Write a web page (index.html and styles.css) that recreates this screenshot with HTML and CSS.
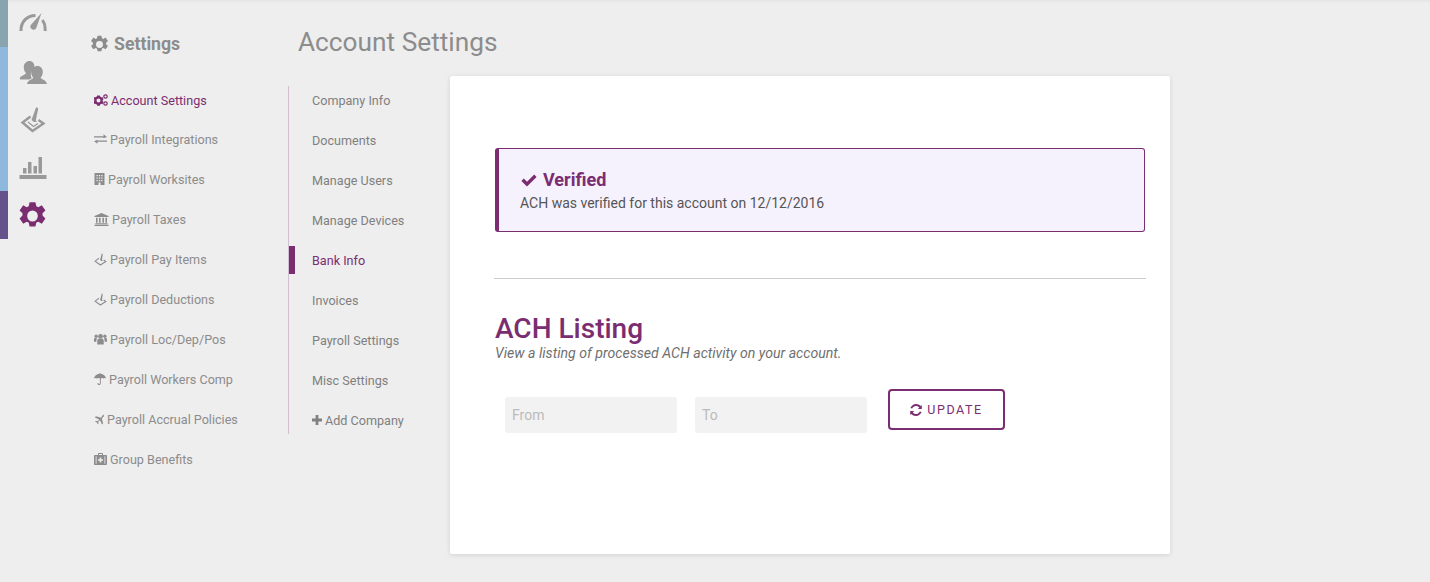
FILE: index.html
```html
<!DOCTYPE html>
<html lang="en">
<head>
<meta charset="utf-8">
<title>Account Settings</title>
<link rel="stylesheet" href="styles.css">
</head>
<body>
<svg class="defs" width="0" height="0" aria-hidden="true">
  <defs>
    <symbol id="i-gear" viewBox="0 0 24 24"><path fill-rule="evenodd" d="M9.600 1h4.800l.8 3.200 1.600.7 2.900-1.600 3 4.200-2.400 2.300v1.800l2.400 2.300-3 4.200-2.900-1.600-1.600.7-.8 3.200H9.600l-.8-3.200-1.600-.7-2.900 1.600-3-4.200 2.400-2.300v-1.800L1.300 7.500l3-4.200 2.900 1.600 1.600-.7zM12 7.600a4.400 4.400 0 1 0 0 8.800 4.400 4.400 0 0 0 0-8.800z"/></symbol>
    <symbol id="i-stamp" viewBox="0 0 16 16"><path d="M9.500.8c.7-.2 1.300.2 1.200.9L9.800 8.500l1.800 1.300-2.200.1-2-1.300z"/><path fill="none" stroke="currentColor" stroke-width="1.300" d="M6 6.500 1.400 10l6.400 4.800 6.800-4.300-2.800-1.800"/></symbol>
  </defs>
</svg>
<div class="app">
  <aside class="rail">
    <div class="rail-strip">
      <span class="strip-a"></span><span class="strip-b"></span><span class="strip-c"></span>
    </div>
    <nav class="rail-icons">
      <a class="rail-item rail-item-up">
        <svg width="28" height="20" viewBox="0 0 28 20"><path fill="none" stroke="currentColor" stroke-width="3" d="M2 18C1.500 9 8 2.500 16.500 2.500"/><path fill="none" stroke="currentColor" stroke-width="3" d="M23.500 7c2 3 3 7 2.500 11"/><path d="M22.500 0 17.300 15a3.100 3.100 0 0 1-5.500-2.900z"/></svg>
      </a>
      <a class="rail-item">
        <svg width="28" height="25" viewBox="0 0 28 25"><path d="M10.500 1c3 0 5 2.500 5 5.500 0 1-.3 2.100-.7 3-1.900 1-3 3.100-3 5.500 0 1.200.4 2.300 1 3.200L10 19.500H1l-.2-1.500c.5-2 5.500-3.100 6.200-5-1.700-1.500-2.200-3.800-2.200-6C4.800 3.500 7.500 1 10.500 1z"/><path d="M18.500 6c3.200 0 5.300 2.500 5.300 5.800 0 2.400-.7 4.500-2.200 5.900.9 1.700 6 2.500 6.400 6.300H8c.4-3.800 5.500-4.600 6.300-6.300-1.500-1.400-2.100-3.500-2.100-5.900C12.200 8.500 15.300 6 18.500 6z"/></svg>
      </a>
      <a class="rail-item">
        <svg width="26" height="26" viewBox="0 0 26 26"><path d="M16 .5c1.300-.4 2.300.4 2.100 1.500L15.800 13.500l1.500 1.200-3.300.3-2.500-2z"/><path fill="none" stroke="currentColor" stroke-width="2.400" d="M10.500 9.500 2.500 15.500l10 8.500 11-7.500-5-3.500"/><path fill="none" stroke="currentColor" stroke-width="1.200" d="M8 15l5.500 4.500 4.500-3"/></svg>
      </a>
      <a class="rail-item">
        <svg width="28" height="24" viewBox="0 0 28 24"><rect x="0.500" y="19" width="27" height="4"/><rect x="4" y="12" width="3.500" height="5.500"/><rect x="9" y="6" width="3.500" height="11.500"/><rect x="14.500" y="10" width="3.500" height="7.500"/><rect x="19.500" y="1" width="3.500" height="16.500"/></svg>
      </a>
      <a class="rail-item rail-item-active">
        <svg width="29" height="30" viewBox="0 0 24 24" preserveAspectRatio="none"><use href="#i-gear" width="24" height="24"/></svg>
      </a>
    </nav>
  </aside>

  <section class="settings-col">
    <h2 class="settings-title">
      <svg width="19" height="19" class="settings-gear"><use href="#i-gear"/></svg>
      <span>Settings</span>
    </h2>
    <ul class="settings-menu">
      <li class="menu-item is-current">
        <svg class="ico" width="14" height="12" viewBox="0 0 14 12"><path fill-rule="evenodd" d="M3.200 1.500h2.600l.4 1.100 1.300.8 1-.3 1 2.200-.8.700v1.200l.8.800-1 2.200-1-.4-1.300.8-.4 1.100H3.200l-.4-1.100-1.300-.8-1 .4L-.5 7.800l.8-.8V5.800l-.8-.7 1-2.200 1 .3 1.300-.8zM4.500 4.500a2 2 0 1 0 0 4 2 2 0 0 0 0-4z"/><circle cx="11.500" cy="2.500" r="1.700" fill="none" stroke="currentColor" stroke-width="1.200"/><circle cx="11.500" cy="9.500" r="1.700" fill="none" stroke="currentColor" stroke-width="1.200"/></svg>
        <span>Account Settings</span>
      </li>
      <li class="menu-item">
        <svg class="ico" width="13" height="10" viewBox="0 0 13 10"><path d="M0 2.300h9.500V.3L13 3l-3.500 1.200V3.400H0zM13 6.500H3.500V5.700L0 7.200 3.500 9.700v-2H13z"/></svg>
        <span>Payroll Integrations</span>
      </li>
      <li class="menu-item">
        <svg class="ico" width="11" height="12" viewBox="0 0 10 12"><path fill-rule="evenodd" d="M0 0h10v12H0zM2 2v1.300h1.300V2zm2.400 0v1.300h1.300V2zm2.300 0v1.300H8V2zM2 4.500v1.300h1.300V4.500zm2.400 0v1.300h1.300V4.500zm2.300 0v1.300H8V4.500zM2 7v1.300h1.300V7zm2.400 0v1.300h1.300V7zm2.300 0v1.300H8V7zM4 9.500V12h2V9.500z"/></svg>
        <span>Payroll Worksites</span>
      </li>
      <li class="menu-item">
        <svg class="ico" width="15" height="13" viewBox="0 0 14 13"><path d="M7 0 14 3v1H0V3zM1.500 4.700h1.600v5H1.500zM4.500 4.700h1.600v5H4.500zM7.900 4.700h1.600v5H7.900zM10.900 4.700h1.600v5h-1.600zM.8 10.300h12.400v1H.8zM0 11.800h14V13H0z"/></svg>
        <span>Payroll Taxes</span>
      </li>
      <li class="menu-item">
        <svg class="ico" width="13" height="13"><use href="#i-stamp"/></svg>
        <span>Payroll Pay Items</span>
      </li>
      <li class="menu-item">
        <svg class="ico" width="13" height="13"><use href="#i-stamp"/></svg>
        <span>Payroll Deductions</span>
      </li>
      <li class="menu-item">
        <svg class="ico" width="13" height="12" viewBox="0 0 14 12"><circle cx="7" cy="3.200" r="2.600"/><circle cx="2.300" cy="3" r="1.800"/><circle cx="11.700" cy="3" r="1.800"/><path d="M3.500 12V8c0-1.500 1-2.200 2-2.200h3c1 0 2 .7 2 2.200v4zM0 9V6.500C0 5.500.7 5 1.500 5H3L2.400 9zM14 9V6.500c0-1-.7-1.500-1.500-1.500H11l.6 4z"/></svg>
        <span>Payroll Loc/Dep/Pos</span>
      </li>
      <li class="menu-item">
        <svg class="ico" width="12" height="12" viewBox="0 0 12 12"><path d="M5.600 0h.8v.8C9.500 1 11.700 3 12 5.500c-.7-.6-1.500-.8-2.200-.1-.6-.7-2.400-.7-3 0V10c0 1.500-.8 2-1.700 2S3.400 11.400 3.400 10h.9c0 .7.300 1 .8 1s.8-.3.800-1V5.400c-.7-.7-2.200-.7-2.900.1C2.300 4.700 1 4.900 0 5.500.3 3 2.500 1 5.600.8z"/></svg>
        <span>Payroll Workers Comp</span>
      </li>
      <li class="menu-item">
        <svg class="ico" width="10" height="11" viewBox="0 0 11 11"><path d="M10.600.4c.6.6.3 1.600-.2 2.100L8.600 4.300 10 10l-1.100 1-2.300-4.800L4.700 8l.3 2-.8.8-1-2-2-1 .8-.8 2 .3L5.800 5.500 1 3.200 2 2l5.700 1.500L9.500.8c.3-.3.800-.7 1.100-.4z"/></svg>
        <span>Payroll Accrual Policies</span>
      </li>
      <li class="menu-item">
        <svg class="ico" width="13" height="12" viewBox="0 0 13 12"><path fill-rule="evenodd" d="M4 2V1c0-.5.400-1 1-1h3c.6 0 1 .5 1 1v1h3c.6 0 1 .5 1 1v8c0 .5-.4 1-1 1H1c-.6 0-1-.5-1-1V3c0-.5.400-1 1-1zm1 0h3V1H5zM1.700 3.200v7.600h.8V3.200zm8.800 0v7.600h.8V3.200zM5.700 4.500v1.700H4v1.600h1.700v1.700h1.600V7.800H9V6.200H7.300V4.500z"/></svg>
        <span>Group Benefits</span>
      </li>
    </ul>
  </section>

  <section class="page-col">
    <h1 class="page-title">Account Settings</h1>
    <div class="page-body">
      <ul class="sub-menu">
        <li class="sub-item">Company Info</li>
        <li class="sub-item">Documents</li>
        <li class="sub-item">Manage Users</li>
        <li class="sub-item">Manage Devices</li>
        <li class="sub-item is-current">Bank Info</li>
        <li class="sub-item">Invoices</li>
        <li class="sub-item">Payroll Settings</li>
        <li class="sub-item">Misc Settings</li>
        <li class="sub-item sub-add">
          <svg width="10" height="10" viewBox="0 0 10 10"><path d="M3.600 0h2.800v3.600H10v2.800H6.400V10H3.600V6.400H0V3.600h3.600z"/></svg>
          <span>Add Company</span>
        </li>
      </ul>
      <main class="card">
        <div class="notice">
          <div class="notice-title">
            <svg width="16" height="13" viewBox="0 0 16 13"><path d="M6 12.600.4 7l2.400-2.400L6 7.800 13.200.6 15.600 3z"/></svg>
            <span>Verified</span>
          </div>
          <p class="notice-text">ACH was verified for this account on 12/12/2016</p>
        </div>
        <hr class="divider">
        <h3 class="section-title">ACH Listing</h3>
        <p class="section-sub">View a listing of processed ACH activity on your account.</p>
        <form class="filter">
          <input class="field" type="text" placeholder="From">
          <input class="field" type="text" placeholder="To">
          <button class="update" type="button">
            <svg width="12" height="12" viewBox="0 0 12 12"><path d="M11.800 1v4H7.800l1.500-1.500C8.700 2.700 7.400 2 6 2 4.300 2 2.800 3.100 2.200 4.600L.4 4C1.300 1.700 3.400 0 6 0c2 0 3.700.8 4.700 2zM.2 11V7h4L2.700 8.500C3.400 9.400 4.600 10 6 10c1.700 0 3.200-1.100 3.800-2.600l1.800.6C10.700 10.300 8.600 12 6 12c-2 0-3.700-.8-4.700-2z"/></svg>
            <span>UPDATE</span>
          </button>
        </form>
      </main>
    </div>
  </section>
</div>
</body>
</html>
```
FILE: styles.css
```css
* { box-sizing: border-box; }
html, body { margin: 0; padding: 0; height: 100%; }
body {
  background: #eeeeee;
  font-family: Roboto, "Liberation Sans", sans-serif;
  font-size: 12.600px;
  color: #888888;
  overflow: hidden;
}
.defs { display: block; height: 0; }
ul { list-style: none; margin: 0; padding: 0; }
.app {
  display: flex;
  height: 582px;
  box-shadow: inset 0 3px 3px -2px #e2e2e2;
}

/* Rail */
.rail { display: flex; width: 80px; flex: none; }
.rail-strip { width: 8px; display: flex; flex-direction: column; }
.strip-a { height: 47px; background: #88a4ae; }
.strip-b { height: 144px; background: #8fb8de; }
.strip-c { height: 48px; background: #66528a; }
.rail-icons { width: 49px; display: flex; flex-direction: column; }
.rail-item {
  height: 48px;
  display: flex;
  align-items: center;
  justify-content: center;
  color: #999999;
  fill: currentColor;
}
.rail-item-up { padding-bottom: 2px; }
.rail-item-active { color: #7b2d71; }

/* Settings column */
.settings-col { width: 200px; flex: none; padding-left: 10px; padding-top: 33px; }
.settings-title {
  margin: 0;
  display: flex;
  align-items: center;
  gap: 5px;
  font-size: 17.700px;
  line-height: 22px;
  font-weight: 700;
  color: #8c8c8c;
}
.settings-gear { fill: #8c8c8c; }
.settings-menu { margin-top: 26px; padding-left: 4px; }
.menu-item {
  height: 40px;
  display: flex;
  align-items: center;
  gap: 3px;
  color: #8c8c8c;
  fill: #8c8c8c;
  white-space: nowrap;
}
.menu-item:first-child { height: 38px; }
.menu-item.is-current { color: #7b2d71; fill: #7b2d71; }
.ico { flex: none; color: inherit; }

/* Page column */
.page-col { flex: none; width: 882px; padding-top: 26px; margin-left: 8px; }
.page-title {
  margin: 0 0 0 10px;
  font-size: 26.250px;
  line-height: 32px;
  font-weight: 400;
  color: #8c8c8c;
}
.page-body { display: flex; margin-top: 18px; }
.sub-menu {
  width: 162px;
  flex: none;
  margin-top: 10px;
  height: 348px;
  border-left: 1px solid #d3bdd0;
  align-self: flex-start;
}
.sub-item {
  height: 40px;
  display: flex;
  align-items: center;
  gap: 3px;
  padding-left: 23px;
  position: relative;
  color: #808080;
  white-space: nowrap;
}
.sub-item:first-child { margin-top: -6px; }
.sub-item.is-current { color: #7b2d71; }
.sub-item.is-current::before {
  content: "";
  position: absolute;
  left: 0;
  top: 6px;
  width: 6px;
  height: 28px;
  background: #7b2d71;
}
.sub-add { fill: #808080; }

/* Card */
.card {
  width: 720px;
  height: 478px;
  flex: none;
  background: #ffffff;
  border-radius: 2px;
  box-shadow: 0 1px 5px rgba(0, 0, 0, 0.12);
  padding: 72px 25px 0 45px;
}
.notice {
  height: 84px;
  background: #f5f2fd;
  border: 1px solid #7b2d71;
  border-left-width: 4px;
  border-radius: 3px;
  padding: 20px 0 0 22px;
}
.notice-title {
  display: flex;
  align-items: center;
  gap: 6px;
  font-size: 18px;
  line-height: 22px;
  font-weight: 700;
  color: #7b2d71;
  fill: #7b2d71;
}
.notice-text {
  margin: 2px 0 0 -1px;
  font-size: 14px;
  line-height: 20px;
  color: #555555;
}
.divider {
  height: 1px;
  border: 0;
  background: #cccccc;
  margin: 46px -1px 0 -1px;
}
.section-title {
  margin: 34px 0 0 0;
  font-size: 28px;
  line-height: 32px;
  font-weight: 500;
  color: #7b2d71;
}
.section-sub {
  margin: -1px 0 0 0;
  font-size: 14.120px;
  line-height: 18px;
  font-style: italic;
  color: #6f6f6f;
}
.filter { display: flex; align-items: flex-start; margin-top: 27px; padding-left: 10px; }
.field {
  width: 172px;
  height: 36px;
  margin-top: 8px;
  margin-right: 18px;
  background: #f2f2f2;
  border: 0;
  border-radius: 3px;
  padding: 0 7px;
  font: 14px Roboto, "Liberation Sans", sans-serif;
  outline: none;
}
.field::placeholder { color: #bbbbbb; opacity: 1; }
.field + .field { margin-right: 21px; }
.update {
  width: 117px;
  height: 41px;
  display: flex;
  align-items: center;
  justify-content: center;
  gap: 5px;
  background: #ffffff;
  border: 2px solid #7b2d71;
  border-radius: 4px;
  color: #7b2d71;
  fill: #7b2d71;
  font: 400 12.500px Roboto, "Liberation Sans", sans-serif;
  letter-spacing: 1.600px;
  padding: 0;
}
```
